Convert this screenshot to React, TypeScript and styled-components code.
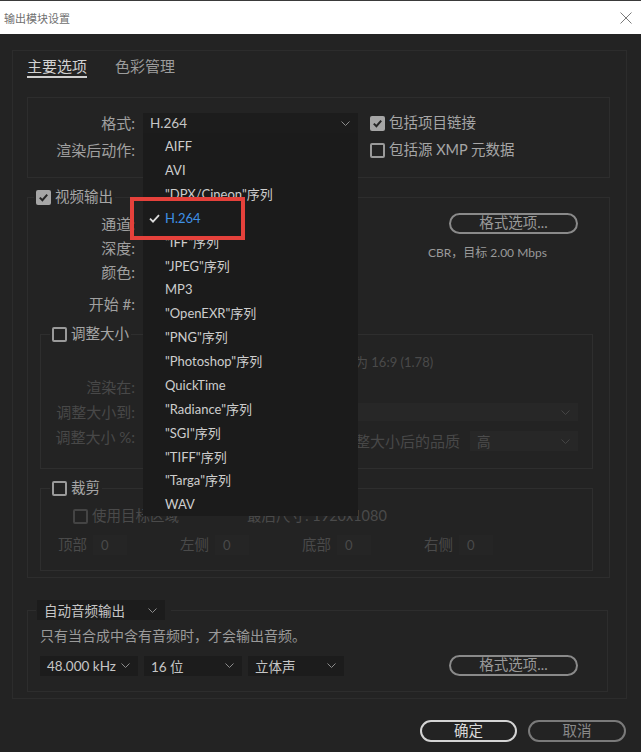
import React from "react"
import styled, { createGlobalStyle } from "styled-components"

const FONT = `Lato, "Noto Sans CJK SC", sans-serif`

const GlobalStyle = createGlobalStyle`
	* { box-sizing: border-box; }
	html, body { margin: 0; padding: 0; background: #232323; }
	body { font-family: ${FONT}; }
`

const FORMATS = [
	"AIFF",
	"AVI",
	"\"DPX/Cineon\"序列",
	"H.264",
	"\"IFF\"序列",
	"\"JPEG\"序列",
	"MP3",
	"\"OpenEXR\"序列",
	"\"PNG\"序列",
	"\"Photoshop\"序列",
	"QuickTime",
	"\"Radiance\"序列",
	"\"SGI\"序列",
	"\"TIFF\"序列",
	"\"Targa\"序列",
	"WAV",
]

const Chevron = () => (
	<svg width="9" height="5" viewBox="0 0 9 5">
		<polyline points="0.5,0.5 4.5,4.5 8.5,0.5" fill="none" stroke="currentColor" strokeWidth="1" />
	</svg>
)

const Select = ({ value, w, h, dim }: { value?: string; w: number; h?: number; dim?: boolean }) => (
	<SelectBox $w={w} $h={h} $dim={dim}>
		<span>{value}</span>
		<ChevronWrap $dim={dim}>
			<Chevron />
		</ChevronWrap>
	</SelectBox>
)

const Check = ({ checked, dim, small, label }: { checked?: boolean; dim?: boolean; small?: boolean; label: string }) => (
	<CheckRow $dim={dim} $small={small}>
		<CheckBox $checked={checked} $dim={dim}>
			{checked && (
				<svg width="11" height="11" viewBox="0 0 11 11">
					<polyline points="1.8,5.6 4.4,8.2 9.2,2.6" fill="none" stroke="#262626" strokeWidth="2" />
				</svg>
			)}
		</CheckBox>
		{label}
	</CheckRow>
)

const App = () => {
	return (
		<>
			<GlobalStyle />
			<Window>
				<TitleBar>
					<Title>输出模块设置</Title>
					<svg width="12" height="12" viewBox="0 0 12 12">
						<path d="M0.5 0.5 L11.5 11.5 M11.5 0.5 L0.5 11.5" stroke="#7a7a7a" strokeWidth="1" />
					</svg>
				</TitleBar>

				<Body>
					<Panel>
						<TabBar>
							<Tab $active>主要选项</Tab>
							<Tab>色彩管理</Tab>
						</TabBar>

						<FormatBox>
							<Label>格式:</Label>
							<SelectWrap>
								<Select value="H.264" w={215} />
								<Popup>
									{FORMATS.map((f) => (
										<PopupItem key={f} $active={f === "H.264"}>
											{f === "H.264" && (
												<TickMark width="11" height="9" viewBox="0 0 11 9">
													<polyline points="1,4.6 4,7.6 10,1.2" fill="none" stroke="#dcdcdc" strokeWidth="1.8" />
												</TickMark>
											)}
											{f}
										</PopupItem>
									))}
									<Highlight />
								</Popup>
							</SelectWrap>
							<Check checked label="包括项目链接" />
							<Label>渲染后动作:</Label>
							<Select w={215} />
							<Check label="包括源 XMP 元数据" />
						</FormatBox>

						<Group $mt={9}>
							<Legend $ml={6}>
								<Check checked label="视频输出" />
							</Legend>
							<VideoGrid>
								<Label>通道:</Label>
								<Select w={180} />
								<RightCol>
									<PillButton $w={129} $tone="normal">格式选项...</PillButton>
									<Note>CBR，目标 2.00 Mbps</Note>
								</RightCol>
								<Label>深度:</Label>
								<Select w={180} />
								<Label>颜色:</Label>
								<Select w={180} />
								<Label>开始 #:</Label>
								<span />
							</VideoGrid>

							<SubGroup $mt={8}>
								<Legend $ml={9}>
									<Check label="调整大小" />
								</Legend>
								<ResizeGrid>
									<span />
									<RatioLine>
										<Check dim small label="锁定长宽比为 16:9 (1.78)" />
									</RatioLine>
									<Label $dim>渲染在:</Label>
									<span />
									<Label $dim>调整大小到:</Label>
									<ControlRow>
										<Select w={290} h={18} dim />
									</ControlRow>
									<Label $dim>调整大小 %:</Label>
									<ControlRow>
										<QualityGroup>
											<Label $dim>调整大小后的品质</Label>
											<Select value="高" w={108} dim />
										</QualityGroup>
									</ControlRow>
								</ResizeGrid>
							</SubGroup>

							<SubGroup $mt={9} $mb={6}>
								<Legend $ml={9}>
									<Check label="裁剪" />
								</Legend>
								<CropBody>
									<CropTop>
										<Check dim label="使用目标区域" />
										<DimText>最后尺寸: 1920x1080</DimText>
									</CropTop>
									<CropFields>
										{["顶部", "左侧", "底部", "右侧"].map((s) => (
											<CropField key={s}>
												<DimText>{s}</DimText>
												<NumInput>0</NumInput>
											</CropField>
										))}
									</CropFields>
								</CropBody>
							</SubGroup>
						</Group>

						<Group $mt={22} $mr={2}>
							<Legend $ml={8} $pr={6}>
								<Select value="自动音频输出" w={128} />
							</Legend>
							<AudioBody>
								<Hint>只有当合成中含有音频时，才会输出音频。</Hint>
								<AudioRow>
									<Select value="48.000 kHz" w={98} />
									<Select value="16 位" w={98} />
									<Select value="立体声" w={96} />
									<PillButton $w={129} $tone="normal" $push>
										格式选项...
									</PillButton>
								</AudioRow>
							</AudioBody>
						</Group>
					</Panel>

					<Footer>
						<PillButton $w={97} $h={22} $tone="primary">确定</PillButton>
						<PillButton $w={98} $h={22} $tone="muted">取消</PillButton>
					</Footer>
				</Body>
			</Window>
		</>
	)
}

export default App

const Window = styled.div`
	width: 641px;
	height: 752px;
	background: #232323;
	display: flex;
	flex-direction: column;
	overflow: hidden;
`

const TitleBar = styled.header`
	height: 34px;
	flex: none;
	background: #ffffff;
	border-top: 1px solid #3a3a3a;
	display: flex;
	align-items: center;
	justify-content: space-between;
	padding: 0 9px 0 4px;
`

const Title = styled.span`
	font-size: 11px;
	color: #707070;
`

const Body = styled.main`
	padding: 16px 14px 0 12px;
	display: flex;
	flex-direction: column;
`

const Panel = styled.section`
	border: 1px solid #2c2c2c;
	padding: 0 16px 6px 14px;
`

const TabBar = styled.nav`
	display: flex;
	gap: 28px;
	padding-top: 5px;
`

const Tab = styled.span<{ $active?: boolean }>`
	font-size: 15px;
	line-height: 20px;
	color: ${({ $active }) => ($active ? "#d2d2d2" : "#9c9c9c")};
	border-bottom: 2px solid ${({ $active }) => ($active ? "#cfcfcf" : "transparent")};
`

const FormatBox = styled.div`
	margin-top: 19px;
	height: 81px;
	border: 1px solid #2d2d2d;
	padding-top: 13px;
	display: grid;
	grid-template-columns: 107px 215px 1fr;
	grid-auto-rows: 24px;
	row-gap: 3px;
	column-gap: 8px;
	align-items: center;

	& > *:nth-child(3n) {
		margin-left: 4px;
	}
`

const Label = styled.span<{ $dim?: boolean }>`
	font-size: 15px;
	line-height: 24px;
	text-align: right;
	white-space: nowrap;
	color: ${({ $dim }) => ($dim ? "#484848" : "#a0a0a0")};
`

const SelectWrap = styled.div`
	position: relative;
	height: 20px;
`

const SelectBox = styled.div<{ $w: number; $h?: number; $dim?: boolean }>`
	width: ${({ $w }) => $w}px;
	height: ${({ $h }) => $h ?? 20}px;
	flex: none;
	display: flex;
	align-items: center;
	justify-content: space-between;
	padding: 0 8px 0 7px;
	background: ${({ $dim }) => ($dim ? "#272727" : "#1c1c1c")};
	color: ${({ $dim }) => ($dim ? "#4c4c4c" : "#c6c6c6")};
	font-size: 13.5px;
	white-space: nowrap;
`

const ChevronWrap = styled.span<{ $dim?: boolean }>`
	display: flex;
	color: ${({ $dim }) => ($dim ? "#444" : "#8c8c8c")};
`

const Popup = styled.ul`
	position: absolute;
	top: 100%;
	left: 0;
	z-index: 10;
	width: 215px;
	margin: 0;
	padding: 1px 0 0;
	list-style: none;
	background: #1b1b1b;
`

const PopupItem = styled.li<{ $active?: boolean }>`
	position: relative;
	height: 23.87px;
	display: flex;
	align-items: center;
	padding-left: 22px;
	font-size: 13px;
	white-space: nowrap;
	color: ${({ $active }) => ($active ? "#3f91e6" : "#cdcdcd")};
`

const TickMark = styled.svg`
	position: absolute;
	left: 6px;
	top: 8px;
`

const Highlight = styled.div`
	position: absolute;
	left: -13px;
	top: 64px;
	width: 115px;
	height: 43px;
	border: 4px solid #e5413b;
	pointer-events: none;
`

const CheckRow = styled.span<{ $dim?: boolean; $small?: boolean }>`
	display: inline-flex;
	align-items: center;
	gap: 4px;
	font-size: ${({ $small }) => ($small ? "13px" : "14.5px")};
	line-height: 20px;
	white-space: nowrap;
	color: ${({ $dim }) => ($dim ? "#4a4a4a" : "#a6a6a6")};
`

const CheckBox = styled.span<{ $checked?: boolean; $dim?: boolean }>`
	width: 15px;
	height: 15px;
	flex: none;
	border-radius: 2px;
	display: flex;
	align-items: center;
	justify-content: center;
	background: ${({ $checked }) => ($checked ? "#a6a6a6" : "transparent")};
	border: ${({ $checked, $dim }) => ($checked ? "none" : `2px solid ${$dim ? "#444" : "#9a9a9a"}`)};
`

const Group = styled.fieldset<{ $mt: number; $mr?: number }>`
	margin: ${({ $mt, $mr }) => `${$mt}px ${$mr ?? 0}px 0 0`};
	padding: 0;
	min-width: 0;
	border: 1px solid #2d2d2d;
`

const SubGroup = styled.fieldset<{ $mt: number; $mb?: number }>`
	margin: ${({ $mt, $mb }) => `${$mt}px 16px ${$mb ?? 0}px 12px`};
	padding: 0;
	min-width: 0;
	border: 1px solid #2e2e2e;
`

const Legend = styled.legend<{ $ml: number; $pr?: number }>`
	margin-left: ${({ $ml }) => $ml}px;
	padding: ${({ $pr }) => `0 ${$pr ?? 2}px 0 ${$pr ? 1 : 2}px`};
	height: 20px;
	display: flex;
	align-items: center;
`

const VideoGrid = styled.div`
	display: grid;
	grid-template-columns: 107px 200px 1fr;
	grid-template-rows: 24px 24px 24px 32px;
	column-gap: 8px;
	align-items: end;
	padding-top: 5px;

	& > * {
		align-self: end;
	}
	& > ${SelectBox} {
		margin-bottom: 2px;
	}
`

const RightCol = styled.div`
	grid-column: 3;
	grid-row: 1 / span 3;
	align-self: start !important;
	display: flex;
	flex-direction: column;
	align-items: flex-start;
	padding-left: 77px;
	padding-top: 1px;
`

const PillButton = styled.button<{ $w: number; $h?: number; $tone: "primary" | "normal" | "muted"; $push?: boolean }>`
	width: ${({ $w }) => $w}px;
	height: ${({ $h }) => $h ?? 21}px;
	margin-left: ${({ $push }) => ($push ? "auto" : "21px")};
	flex: none;
	padding: 0;
	border-radius: 11px;
	background: transparent;
	font-family: ${FONT};
	font-size: 14.5px;
	line-height: 1;
	border: 2px solid
		${({ $tone }) => ($tone === "primary" ? "#d4d4d4" : $tone === "muted" ? "#7a7a7a" : "#8a8a8a")};
	color: ${({ $tone }) => ($tone === "primary" ? "#dadada" : $tone === "muted" ? "#8a8a8a" : "#999999")};
`

const Note = styled.span`
	margin-top: 10px;
	font-size: 12px;
	line-height: 18px;
	color: #9a9a9a;
	white-space: nowrap;
`

const ResizeGrid = styled.div`
	display: grid;
	grid-template-columns: 94px 1fr;
	grid-auto-rows: 24px;
	row-gap: 1px;
	column-gap: 8px;
	align-items: center;
	padding: 6px 14px 19px 0;
`

const RatioLine = styled.div`
	margin-left: 128px;
	display: flex;
`

const DimText = styled.span`
	font-size: 14.5px;
	line-height: 24px;
	white-space: nowrap;
	color: #4a4a4a;
`

const ControlRow = styled.div`
	display: flex;
	align-items: center;
	justify-content: flex-end;
`

const QualityGroup = styled.div`
	display: flex;
	align-items: center;
	gap: 10px;
	margin-top: 8px;
`

const CropBody = styled.div`
	padding: 6px 0 13px;
	display: flex;
	flex-direction: column;
	gap: 5px;
`

const CropTop = styled.div`
	height: 24px;
	display: grid;
	grid-template-columns: 174px auto;
	align-items: center;
	padding-left: 32px;
`

const CropFields = styled.div`
	height: 24px;
	display: grid;
	grid-template-columns: repeat(4, 122px);
	padding-left: 17px;
`

const CropField = styled.div`
	display: flex;
	align-items: center;
	gap: 6px;
`

const NumInput = styled.span`
	width: 34px;
	height: 20px;
	padding-left: 8px;
	font-size: 13px;
	line-height: 20px;
	color: #4a4a4a;
	background: #252525;
`

const AudioBody = styled.div`
	padding: 4px 29px 15px 12px;
`

const Hint = styled.p`
	margin: 0;
	font-size: 14px;
	line-height: 24px;
	color: #9a9a9a;
	white-space: nowrap;
`

const AudioRow = styled.div`
	margin-top: 7px;
	display: flex;
	align-items: center;
	gap: 6px;
`

const Footer = styled.footer`
	display: flex;
	justify-content: flex-end;
	gap: 11px;
	padding: 21px 1px 0 0;

	& > ${PillButton} {
		margin-left: 0;
	}
`
